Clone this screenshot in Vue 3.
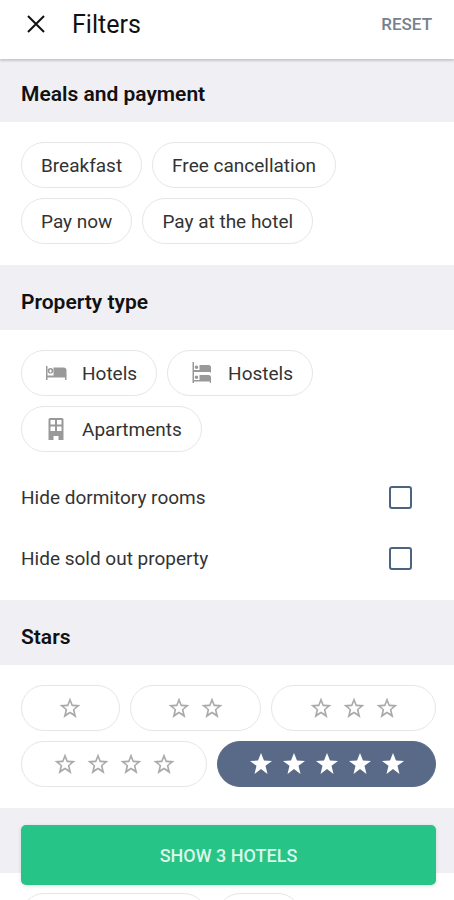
<template>
  <div class="filters">
    <header class="header">
      <button class="close-btn" type="button" aria-label="Close">
        <svg width="20" height="20" viewBox="0 0 20 20">
          <path d="M2 2l16 16M18 2L2 18" fill="none" stroke="#111" stroke-width="2" />
        </svg>
      </button>
      <h1 class="title">Filters</h1>
      <button class="reset-btn" type="button" @click="reset">RESET</button>
    </header>

    <main class="content">
      <section>
        <h2 class="section-title">Meals and payment</h2>
        <div class="section-body chips">
          <button v-for="meal in meals" :key="meal" class="chip" :class="{ active: selected.includes(meal) }"
            type="button" @click="toggle(meal)">
            {{ meal }}
          </button>
        </div>
      </section>

      <section>
        <h2 class="section-title">Property type</h2>
        <div class="section-body chips">
          <button v-for="type in types" :key="type.name" class="chip with-icon"
            :class="{ active: selected.includes(type.name) }" type="button" @click="toggle(type.name)">
            <svg class="icon" viewBox="0 0 24 24" fill="currentColor">
              <path v-for="d in type.paths" :key="d" :d="d" fill-rule="evenodd" />
            </svg>
            {{ type.name }}
          </button>
        </div>
        <div class="options">
          <label v-for="option in options" :key="option.label" class="option">
            <span>{{ option.label }}</span>
            <input v-model="option.checked" type="checkbox" class="checkbox" />
          </label>
        </div>
      </section>

      <section>
        <h2 class="section-title">Stars</h2>
        <div class="section-body chips">
          <button v-for="n in 5" :key="n" class="chip stars" :class="{ active: stars === n }" type="button"
            :aria-label="n + ' stars'" @click="stars = n">
            <svg v-for="i in n" :key="i" class="star" viewBox="0 0 24 24" fill="currentColor">
              <path :d="stars === n ? starFull : starBorder" />
            </svg>
          </button>
        </div>
      </section>

      <section>
        <div class="section-title"></div>
        <div class="section-body chips">
          <button class="chip blank wide" type="button"></button>
          <button class="chip blank" type="button"></button>
        </div>
      </section>
    </main>

    <button class="show-btn" type="button">SHOW 3 HOTELS</button>
  </div>
</template>

<script setup>
import { ref } from 'vue'

const starFull = 'M12 16.900L18.500 22l-2-8.200L23 9l-8-.4L12 1 9 8.600 1 9l6.500 4.800L5.500 22z'
const starBorder = 'M22.500 9l-7.800-.4L12 1.500 9.300 8.600 1.500 9l6 4.800L5.500 22 12 17.600 18.500 22l-2-8.200L22.500 9zM12 15.400l-3.760 2.270 1-4.280-3.320-2.880 4.380-.38L12 6.100l1.710 4.040 4.380.38-3.320 2.880 1 4.280L12 15.400z'

const meals = ['Breakfast', 'Free cancellation', 'Pay now', 'Pay at the hotel']

const types = [
  {
    name: 'Hotels',
    paths: [
      'M2 5h1.500v9.500h19V19H21v-2.500H3.500V19H2z',
      'M9.500 6.500h10a3 3 0 0 1 3 3V15h-13z',
      'M6.500 7a2.800 2.800 0 1 1 0 5.600a2.800 2.800 0 1 1 0-5.600zM6 8.500v1H5v1h1v1h1v-1h1v-1H7v-1z'
    ]
  },
  {
    name: 'Hostels',
    paths: [
      'M2.500 1H4v21H2.500z',
      'M4 9h17v2.500h-1.200V11H4zM4 19h17v3h-1.200v-1.500H4z',
      'M9.500 4h9a2.500 2.500 0 0 1 2.500 2.500V10H9.500zM9.500 14h9a2.500 2.500 0 0 1 2.500 2.500V20H9.500z',
      'M6.500 4.500a1.800 1.800 0 1 1 0 3.600a1.800 1.800 0 1 1 0-3.600zM6.500 14.500a1.800 1.800 0 1 1 0 3.600a1.800 1.800 0 1 1 0-3.600z'
    ]
  },
  {
    name: 'Apartments',
    paths: [
      'M6 1h12a1.500 1.500 0 0 1 1.500 1.500V23h-5v-4h-5v4h-5V2.500A1.500 1.500 0 0 1 6 1zM6.500 3v4.500H11V3zM13 3v4.500h4.500V3zM6.500 9.500v4.500H11V9.500zM13 9.500v4.500h4.500V9.500z'
    ]
  }
]

const options = ref([
  { label: 'Hide dormitory rooms', checked: false },
  { label: 'Hide sold out property', checked: false }
])

const selected = ref([])
const stars = ref(5)

function toggle(name) {
  selected.value = selected.value.includes(name)
    ? selected.value.filter((item) => item !== name)
    : [...selected.value, name]
}

function reset() {
  selected.value = []
  stars.value = 0
  options.value.forEach((option) => (option.checked = false))
}
</script>

<style>
body {
  margin: 0;
  background: #fff;
}
</style>

<style scoped>
.filters {
  display: flex;
  flex-direction: column;
  height: 100vh;
  overflow: hidden;
  font-family: Roboto, "Liberation Sans", sans-serif;
  color: #2b2b2b;
}

button {
  font-family: inherit;
  cursor: pointer;
}

/* overlaps the first section title a little so its shadow falls on it */
.header {
  position: relative;
  display: flex;
  align-items: center;
  flex-shrink: 0;
  box-sizing: border-box;
  height: 59px;
  margin-bottom: -2px;
  padding: 0 22px 11px 26px;
  background: #fff;
  box-shadow: 0 2px 2px rgba(0, 0, 0, 0.16);
}

.close-btn,
.reset-btn {
  padding: 0;
  border: none;
  background: none;
}

.close-btn {
  display: flex;
}

.title {
  flex: 1;
  margin: 0 0 0 26px;
  font-size: 25px;
  font-weight: 400;
  color: #111;
}

.reset-btn {
  font-size: 17px;
  font-weight: 500;
  color: #75818f;
}

.content {
  flex: 1;
  min-height: 0;
  overflow-y: auto;
  scrollbar-width: none;
}

.section-title {
  box-sizing: border-box;
  height: 65px;
  margin: 0;
  padding: 8px 21px 0;
  background: #efeff4;
  font-size: 21px;
  font-weight: 600;
  line-height: 59px;
  color: #111;
}

.section-body {
  padding: 20px 18px 21px 21px;
}

.chips {
  display: flex;
  flex-wrap: wrap;
  gap: 10px;
}

.chip {
  display: flex;
  align-items: center;
  justify-content: center;
  box-sizing: border-box;
  height: 46px;
  padding: 0 19px;
  border: 1px solid #e6e6e6;
  border-radius: 23px;
  background: #fff;
  font-size: 19px;
  color: #333;
}

.chip.active {
  border-color: #586a87;
  background: #586a87;
  color: #fff;
}

.with-icon {
  gap: 14px;
  padding-left: 22px;
}

.icon {
  width: 24px;
  height: 24px;
  color: #999;
}

.stars {
  flex-grow: 1;
  gap: 9px;
  padding: 0 30px;
  color: #aaa;
}

.star {
  width: 24px;
  height: 24px;
}

.blank {
  width: 84px;
}

.wide {
  width: 186px;
}

.options {
  padding: 0 42px 11px 21px;
  margin-top: -6px;
}

.option {
  display: flex;
  align-items: center;
  justify-content: space-between;
  height: 61px;
  font-size: 19px;
  color: #333;
}

.checkbox {
  appearance: none;
  box-sizing: border-box;
  width: 23px;
  height: 23px;
  margin: 0;
  border: 2px solid #4b6482;
  border-radius: 3px;
  background: #fff;
}

.checkbox:checked {
  background: #586a87;
}

.show-btn {
  position: absolute;
  right: 18px;
  bottom: 15px;
  left: 21px;
  height: 60px;
  border: none;
  border-radius: 5px;
  background: #26c486;
  box-shadow: 0 1px 4px rgba(0, 0, 0, 0.12);
  font-size: 18px;
  font-weight: 500;
  color: #d9f7ea;
}
</style>
